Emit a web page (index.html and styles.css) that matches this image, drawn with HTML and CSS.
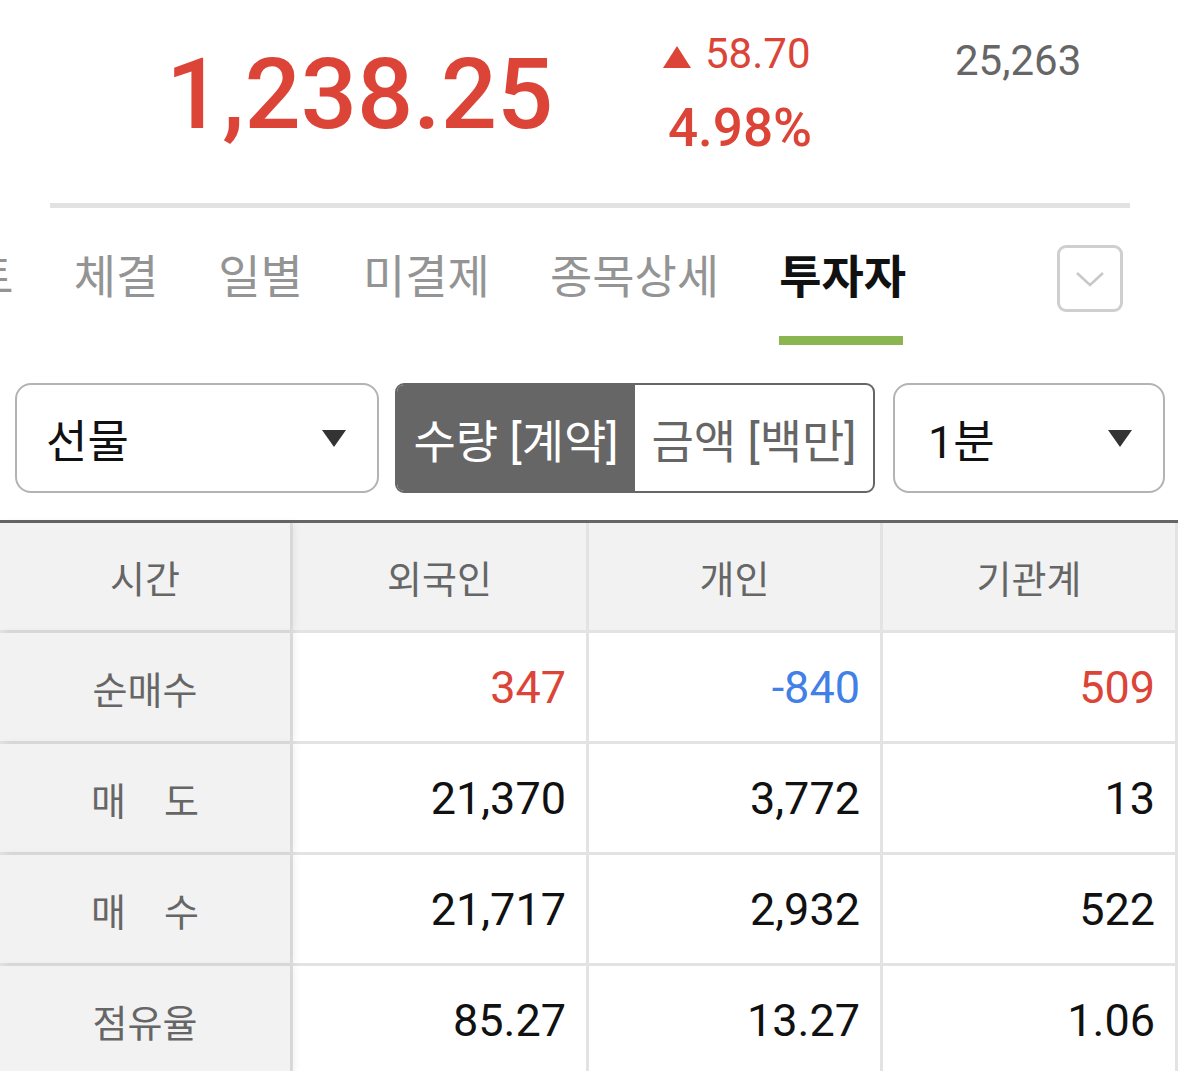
FILE: index.html
```html
<!DOCTYPE html>
<html lang="ko">
<head>
    <meta charset="UTF-8">
    <title>투자자</title>
    <link rel="stylesheet" href="styles.css">
</head>
<body>
    <div class="quote">
        <div class="price">1,238.25</div>
        <div class="change">
            <div class="change-pt"><span class="up-tri"></span>58.70</div>
            <div class="change-pct">4.98%</div>
        </div>
        <div class="volume">25,263</div>
    </div>
    <div class="rule"></div>

    <div class="tabbar">
        <div class="tabs-scroll">
            <div class="tabs">
                <div class="tab">차트</div>
                <div class="tab">체결</div>
                <div class="tab">일별</div>
                <div class="tab">미결제</div>
                <div class="tab">종목상세</div>
                <div class="tab active">투자자</div>
            </div>
        </div>
        <div class="more">
            <div class="more-box">
                <svg width="30" height="18" viewBox="0 0 30 18"><polyline points="2,3 15,15 28,3" fill="none" stroke="#c8c8c8" stroke-width="2.5"/></svg>
            </div>
        </div>
    </div>

    <div class="controls">
        <div class="select select-wide">
            <span>선물</span>
            <span class="down-tri"></span>
        </div>
        <div class="segment">
            <div class="seg on">수량 [계약]</div>
            <div class="seg">금액 [백만]</div>
        </div>
        <div class="select select-small">
            <span>1분</span>
            <span class="down-tri"></span>
        </div>
    </div>

    <div class="grid">
        <div class="cell head first">시간</div>
        <div class="cell head">외국인</div>
        <div class="cell head">개인</div>
        <div class="cell head">기관계</div>

        <div class="cell label first">순매수</div>
        <div class="cell num red">347</div>
        <div class="cell num blue">-840</div>
        <div class="cell num red">509</div>

        <div class="cell label first">매　도</div>
        <div class="cell num">21,370</div>
        <div class="cell num">3,772</div>
        <div class="cell num">13</div>

        <div class="cell label first">매　수</div>
        <div class="cell num">21,717</div>
        <div class="cell num">2,932</div>
        <div class="cell num">522</div>

        <div class="cell label first">점유율</div>
        <div class="cell num">85.27</div>
        <div class="cell num">13.27</div>
        <div class="cell num">1.06</div>
    </div>
</body>
</html>
```

FILE: styles.css
```css
/* Grundlayout */

body {
    margin: 0;
    width: 1178px;
    height: 1071px;
    overflow: hidden;
    background-color: #fff;
    font-family: Roboto, "Noto Sans CJK KR", sans-serif;
}

/* Kursanzeige */
.quote {
    display: flex;
    height: 203px;
    padding-left: 166px;
    box-sizing: border-box;
}

.price {
    width: 497px;
    margin-top: 45px;
    font-size: 99px;
    font-weight: 500;
    line-height: 1;
    color: #db4437;
}

.change {
    width: 292px;
    margin-top: 33px;
    color: #db4437;
}

.change-pt {
    display: flex;
    align-items: center;
    font-size: 42px;
    line-height: 42px;
}

.up-tri {
    width: 0;
    height: 0;
    border-left: 14px solid transparent;
    border-right: 14px solid transparent;
    border-bottom: 22px solid #db4437;
    margin-right: 14px;
    margin-top: 6px;
}

.change-pct {
    margin-top: 27px;
    padding-left: 5px;
    font-size: 53px;
    font-weight: 500;
    line-height: 1;
}

.volume {
    margin-top: 40px;
    font-size: 42px;
    line-height: 1;
    color: #666;
}

.rule {
    height: 5px;
    margin: 0 48px 0 50px;
    background-color: #e2e2e2;
}

/* Reiter */
.tabbar {
    display: flex;
    height: 137px;
}

.tabs-scroll {
    flex: 1;
    overflow: hidden;
}

.tabs {
    display: flex;
    gap: 60px;
    margin-left: -71px;
}

.tab {
    flex-shrink: 0;
    padding-top: 44px;
    font-size: 46px;
    line-height: 50px;
    color: #949494;
    white-space: nowrap;
}

.tab.active {
    font-weight: bold;
    color: #111;
}

.tab.active::after {
    content: "";
    display: block;
    height: 9px;
    margin-top: 34px;
    margin-right: 3px;
    background-color: #8bb550;
}

.more {
    width: 248px;
    display: flex;
    justify-content: center;
    padding-top: 37px;
    padding-left: 72px;
    box-sizing: border-box;
}

.more-box {
    width: 60px;
    height: 61px;
    border: 3px solid #cfcfcf;
    border-radius: 9px;
    display: flex;
    align-items: center;
    justify-content: center;
}

/* Auswahlzeile */
.controls {
    display: flex;
    gap: 16px;
    padding: 38px 13px 0 15px;
    height: 110px;
}

.select {
    display: flex;
    align-items: center;
    justify-content: space-between;
    border: 2px solid #b3b3b3;
    border-radius: 16px;
    padding: 0 31px 0 29px;
    font-size: 45px;
    color: #111;
}

.select-wide {
    width: 364px;
    box-sizing: border-box;
}

.select-small {
    width: 272px;
    box-sizing: border-box;
    margin-left: 2px;
    padding-left: 33px;
}

.down-tri {
    width: 0;
    height: 0;
    border-left: 12px solid transparent;
    border-right: 12px solid transparent;
    border-top: 17px solid #333;
}

.segment {
    display: flex;
    width: 480px;
    box-sizing: border-box;
    border: 2px solid #666;
    border-radius: 9px;
    overflow: hidden;
}

.seg {
    flex: 1;
    display: flex;
    align-items: center;
    justify-content: center;
    font-size: 46px;
    color: #666;
    white-space: nowrap;
}

.seg.on {
    background-color: #666;
    color: #fff;
}

/* Tabelle */
.grid {
    display: grid;
    grid-template-columns: 290px 293px 291px 292px;
    grid-auto-rows: 108px;
    grid-template-rows: 107px;
    gap: 3px;
    margin-top: 27px;
    width: 1175px;
    padding-right: 3px;
    border-top: 3px solid #666;
    background-color: #e3e3e3;
}

.cell {
    display: flex;
    align-items: center;
    background-color: #fff;
}

.cell.head {
    justify-content: center;
    background-color: #f2f2f2;
    font-size: 38px;
    color: #666;
}

.cell.first {
    position: relative;
    z-index: 1;
    background-color: #f2f2f2;
    box-shadow: 4px 0 8px rgba(0, 0, 0, 0.07);
}

.cell.label {
    justify-content: center;
    font-size: 38px;
    color: #666;
}

.cell.num {
    justify-content: flex-end;
    padding-right: 20px;
    font-size: 45px;
    color: #111;
}

.red {
    color: #db4437 !important;
}

.blue {
    color: #4180e6 !important;
}
```
